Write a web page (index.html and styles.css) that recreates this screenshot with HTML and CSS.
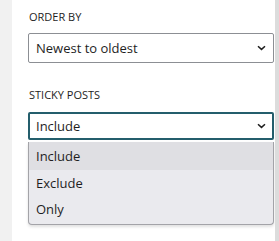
FILE: index.html
```html
<!DOCTYPE html>
<html>
<head>
<meta charset="utf-8">
<link rel="stylesheet" href="styles.css">
</head>
<body>
<div class="frame">
  <div class="gutter"></div>
  <div class="panel">
    <div class="label first">Order by</div>
    <div class="select">
      <span>Newest to oldest</span>
      <svg class="chev" width="9" height="6" viewBox="0 0 9 6"><path d="M1 1.2 L4.5 4.4 L8 1.2" fill="none" stroke="#1e1e1e" stroke-width="1.5"/></svg>
    </div>
    <div class="label second">Sticky posts</div>
    <div class="select focused">
      <span>Include</span>
      <svg class="chev" width="9" height="6" viewBox="0 0 9 6"><path d="M1 1.2 L4.5 4.4 L8 1.2" fill="none" stroke="#1e1e1e" stroke-width="1.5"/></svg>
    </div>
    <div class="menu">
      <div class="opt active">Include</div>
      <div class="opt">Exclude</div>
      <div class="opt">Only</div>
    </div>
  </div>
  <div class="scroll"></div>
</div>
</body>
</html>
```
FILE: styles.css
```css
html, body { margin: 0; padding: 0; background: #fff; }
body { font-family: "Open Sans", "Noto Sans", sans-serif; color: #1e1e1e; }
.frame { display: flex; width: 279px; height: 241px; overflow: hidden; }
.gutter { width: 12px; flex: none; background: #f1f1f1; }
.panel { flex: 1; padding: 0 1px 0 16px; background: #fff; }
.scroll { width: 4px; flex: none; background: #dcdcdc; }
.label { font-size: 11px; text-transform: uppercase; line-height: 14px; padding-left: 1px; }
.label.first { margin-top: 10px; }
.label.second { margin-top: 25px; }
.select { margin-top: 9px; height: 28px; border: 1px solid #8c8f94; border-radius: 2px; display: flex; align-items: center; justify-content: space-between; padding: 0 7px 0 7px; font-size: 13px; }
.select.focused { margin-top: 10px; height: 24px; border: 2px solid #245e6c; padding: 0 6px 0 6px; }
.chev { display: block; }
.menu { margin-top: 1px; border: 1px solid #a3a3a8; border-top: none; border-radius: 0 0 4px 4px; background: #eaeaee; box-shadow: 0 2px 3px rgba(0,0,0,0.12); padding-bottom: 2px; }
.opt { height: 26px; line-height: 26px; padding-left: 7px; font-size: 13px; }
.opt.active { background: #dfdfe3; margin-top: 2px; height: 28px; line-height: 28px; }
```
